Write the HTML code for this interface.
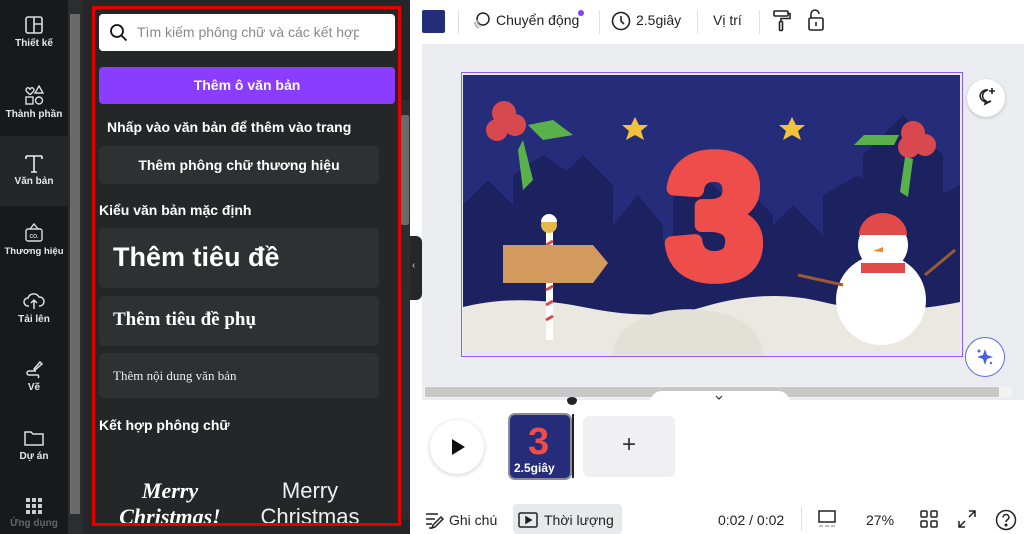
<!DOCTYPE html>
<html><head><meta charset="utf-8">
<style>
*{margin:0;padding:0;box-sizing:border-box}
body{width:1024px;height:534px;overflow:hidden;background:#fff;font-family:"Liberation Sans","Noto Sans CJK SC",sans-serif;position:relative}
.abs{position:absolute}
.rail{left:0;top:0;width:68px;height:534px;background:#18191b}
.ri{position:absolute;left:0;width:68px;text-align:center;color:#e8e8e8;font-size:10px;font-weight:bold}
.ri svg{display:block;margin:0 auto 3px}
.panel{left:68px;top:0;width:342px;height:534px;background:#252627}
.t{color:#fff;font-weight:bold}
.card{position:absolute;left:99px;width:280px;background:#2f3032;border-radius:5px}
.tb{color:#222;font-size:14px}
</style></head><body>
<div class="abs rail"></div>
<div class="abs" style="left:0;top:136px;width:68px;height:70px;background:#252627"></div>
<div class="ri" style="top:15px"><svg width="20" height="20" viewBox="0 0 20 20" fill="none" stroke="#ddd" stroke-width="1.6"><rect x="2" y="2" width="16" height="16" rx="2"/><path d="M10 2v16M10 9h8"/></svg>Thiết kế</div>
<div class="ri" style="top:84px"><svg width="22" height="22" viewBox="0 0 22 22" fill="none" stroke="#ddd" stroke-width="1.4"><path d="M3 6c0-3 4-3 4 0 0-3 4-3 4 0 0 2-4 4-4 5-0-1-4-3-4-5z"/><path d="M16 2l4 7h-8z"/><rect x="3" y="13" width="7" height="7"/><circle cx="16" cy="16.5" r="3.5"/></svg>Thành phần</div>
<div class="ri" style="top:153px"><svg width="22" height="20" viewBox="0 0 22 20" fill="none" stroke="#eee" stroke-width="1.6"><path d="M3 3h16M11 3v16M8 19h6M3 3v3M19 3v3"/></svg>Văn bản</div>
<div class="ri" style="top:221px;font-size:9.5px"><svg width="20" height="22" viewBox="0 0 20 22" fill="none" stroke="#ddd" stroke-width="1.4"><path d="M6 8l4-5 4 5"/><rect x="2" y="8" width="16" height="12" rx="2"/><text x="10" y="17" font-size="5" fill="#ddd" stroke="none" text-anchor="middle">CO.</text></svg>Thương hiệu</div>
<div class="ri" style="top:291px"><svg width="22" height="20" viewBox="0 0 22 20" fill="none" stroke="#ddd" stroke-width="1.5"><path d="M6 15H5a4 4 0 010-8 6 6 0 0111-1 4 4 0 011 9h-1M11 18v-9M8 12l3-3 3 3"/></svg>Tải lên</div>
<div class="ri" style="top:359px"><svg width="20" height="20" viewBox="0 0 20 20" fill="none" stroke="#ddd" stroke-width="1.5"><path d="M10 10l6-7 2 2-7 6zM12 12H5a2 2 0 000 4h9a2 2 0 010 3"/></svg>Vẽ</div>
<div class="ri" style="top:428px"><svg width="22" height="20" viewBox="0 0 22 20" fill="none" stroke="#ddd" stroke-width="1.5"><path d="M2 4h6l2 2h10v11H2z"/></svg>Dự án</div>
<div class="ri" style="top:497px;color:#666"><svg width="18" height="18" viewBox="0 0 18 18" fill="#ccc"><rect x="1" y="1" width="4" height="4"/><rect x="7" y="1" width="4" height="4"/><rect x="13" y="1" width="4" height="4"/><rect x="1" y="7" width="4" height="4"/><rect x="7" y="7" width="4" height="4"/><rect x="13" y="7" width="4" height="4"/><rect x="1" y="13" width="4" height="4"/><rect x="7" y="13" width="4" height="4"/><rect x="13" y="13" width="4" height="4"/></svg>Ứng dụng</div>

<div class="abs panel"></div>
<div class="abs" style="left:68px;top:0;width:14px;height:534px;background:#2c2d2f"></div>
<div class="abs" style="left:70px;top:14px;width:10px;height:500px;background:#6a6a6a"></div>
<div class="abs" style="left:400px;top:100px;width:10px;height:420px;background:#2c2d2f"></div>
<div class="abs" style="left:401px;top:115px;width:8px;height:110px;background:#6a6a6a;border-radius:2px"></div>

<div class="abs" style="left:99px;top:14px;width:296px;height:37px;background:#fff;border-radius:4px"></div>
<svg class="abs" style="left:109px;top:23px" width="20" height="20" viewBox="0 0 20 20" fill="none" stroke="#111" stroke-width="1.8"><circle cx="8" cy="8" r="6"/><path d="M12.5 12.5l5 5"/></svg>
<div class="abs" style="left:137px;top:24px;color:#888;font-size:14px;white-space:nowrap;width:222px;overflow:hidden">Tìm kiếm phông chữ và các kết hợp</div>
<div class="abs" style="left:99px;top:67px;width:296px;height:37px;background:#8b3dff;border-radius:4px;color:#fff;font-weight:bold;font-size:14px;text-align:center;line-height:37px">Thêm ô văn bản</div>
<div class="abs t" style="left:107px;top:119px;font-size:14px">Nhấp vào văn bản để thêm vào trang</div>
<div class="card" style="top:146px;height:38px;line-height:38px;text-align:center;color:#fff;font-weight:bold;font-size:14px">Thêm phông chữ thương hiệu</div>
<div class="abs t" style="left:99px;top:202px;font-size:14px">Kiểu văn bản mặc định</div>
<div class="card" style="top:228px;height:60px"><div style="position:absolute;left:14px;top:14px;color:#fff;font-weight:bold;font-size:27px">Thêm tiêu đề</div></div>
<div class="card" style="top:296px;height:50px"><div style="position:absolute;left:14px;top:13px;color:#fff;font-weight:bold;font-size:19px;font-family:'Liberation Serif',serif">Thêm tiêu đề phụ</div></div>
<div class="card" style="top:353px;height:45px"><div style="position:absolute;left:14px;top:15px;color:#eee;font-size:13px;font-family:'Liberation Serif',serif">Thêm nội dung văn bản</div></div>
<div class="abs t" style="left:99px;top:417px;font-size:14px">Kết hợp phông chữ</div>
<div class="abs" style="left:110px;top:478px;width:120px;text-align:center;color:#fff;font-weight:bold;font-style:italic;font-size:22px;font-family:'Liberation Serif',serif;line-height:26px">Merry<br>Christmas!</div>
<div class="abs" style="left:250px;top:478px;width:120px;text-align:center;color:#eee;font-size:22px;line-height:26px">Merry<br>Christmas</div>
<div class="abs" style="left:92px;top:6px;width:309px;height:520px;border:3px solid #e00000"></div>
<div class="abs" style="left:410px;top:236px;width:12px;height:64px;background:#252627;border-radius:0 6px 6px 0"></div>
<div class="abs" style="left:412px;top:260px;color:#ccc;font-size:10px">‹</div>

<!-- top bar -->
<div class="abs" style="left:422px;top:10px;width:23px;height:23px;background:#242d7a;border-radius:2px"></div>
<div class="abs" style="left:458px;top:10px;width:1px;height:24px;background:#e0e0e0"></div>
<svg class="abs" style="left:472px;top:10px" width="22" height="22" viewBox="0 0 22 22" fill="none" stroke="#222" stroke-width="1.5"><circle cx="11" cy="9" r="6"/><path d="M5 10a6 6 0 004 6M3 12a6 6 0 004 6" stroke="#aaa"/></svg>
<div class="abs tb" style="left:496px;top:12px">Chuyển động</div>
<div class="abs" style="left:578px;top:10px;width:6px;height:6px;border-radius:50%;background:#8b3dff"></div>
<div class="abs" style="left:599px;top:10px;width:1px;height:24px;background:#e0e0e0"></div>
<svg class="abs" style="left:611px;top:11px" width="20" height="20" viewBox="0 0 20 20" fill="none" stroke="#222" stroke-width="1.6"><circle cx="10" cy="10" r="8.5"/><path d="M10 5v5l3 3"/></svg>
<div class="abs tb" style="left:636px;top:12px">2.5giây</div>
<div class="abs" style="left:697px;top:10px;width:1px;height:24px;background:#e0e0e0"></div>
<div class="abs tb" style="left:713px;top:12px">Vị trí</div>
<div class="abs" style="left:759px;top:10px;width:1px;height:24px;background:#e0e0e0"></div>
<svg class="abs" style="left:772px;top:9px" width="20" height="24" viewBox="0 0 20 24" fill="none" stroke="#222" stroke-width="1.6"><rect x="2" y="2" width="14" height="5" rx="1"/><path d="M16 4.5h2v5H9v3"/><rect x="7.5" y="12.5" width="3" height="9" rx="1"/></svg>
<svg class="abs" style="left:806px;top:8px" width="20" height="24" viewBox="0 0 20 24" fill="none" stroke="#222" stroke-width="1.6"><path d="M5 10V6a4 4 0 018 0"/><rect x="3" y="10" width="14" height="12" rx="1.5"/><path d="M10 14v4"/></svg>

<!-- canvas area -->
<div class="abs" style="left:422px;top:44px;width:602px;height:356px;background:#ebecf0"></div>
<div class="abs" style="left:461px;top:72px;width:502px;height:285px;border:1.5px solid #8b5cf6"></div>
<svg class="abs" style="left:463px;top:75px" width="497" height="280" viewBox="0 0 497 280">
<rect width="497" height="280" fill="#252c7a"/>
<g fill="#1c2260">
<path d="M0 130l25-25 25 25v-30l30-20 30 20v80H0z"/>
<path d="M90 110l30-30 30 30v90H90z"/>
<path d="M150 150l25-30 25 30v80h-50z"/>
<path d="M210 120l25-25 25 25v100h-50z"/>
<path d="M250 140l30-30 30 30v110h-60z"/>
<path d="M300 160l30-30 30 30v80h-60z"/>
<path d="M360 120l35-20 30 20v120h-65z"/>
<path d="M400 80l40-40 40 40v160h-80z"/>
<path d="M460 130l37-20v130h-37z"/>
<rect x="0" y="165" width="497" height="80"/>
</g>
<path d="M0 232c40-10 80-8 120 0s80 12 120 0 80-15 120-5 90 10 137 0v53H0z" fill="#ebe8e1"/>
<path d="M150 280c0-30 40-50 90-45s60 30 60 45z" fill="#e3e0d8"/>
<circle cx="41" cy="38" r="12" fill="#d8494f"/><circle cx="52" cy="50" r="11" fill="#d8494f"/><circle cx="34" cy="55" r="11" fill="#d8494f"/>
<path d="M65 50l25-5 20 15-30 5z M60 65l10 40-10 10-5-40z" fill="#5ab04a"/>
<circle cx="450" cy="58" r="12" fill="#d8494f"/><circle cx="462" cy="70" r="11" fill="#d8494f"/><circle cx="446" cy="72" r="11" fill="#d8494f"/>
<path d="M436 60l-35 0-10 10 40 0z M442 82l-5 35 8 5 5-38z" fill="#5ab04a"/>
<path d="M172 42l4 8 9 0-7 6 3 9-9-5-9 5 3-9-7-6 9 0z" fill="#f2c33a"/>
<path d="M329 42l4 8 9 0-7 6 3 9-9-5-9 5 3-9-7-6 9 0z" fill="#f2c33a"/>
<text x="252" y="200" font-family="Liberation Sans, sans-serif" font-weight="700" font-size="170" fill="#ef4d4a" stroke="#ef4d4a" stroke-width="14" stroke-linejoin="round" text-anchor="middle">3</text>
<rect x="83" y="155" width="7" height="110" fill="#fff"/><path d="M83 170l7-4M83 185l7-4M83 200l7-4M83 215l7-4M83 230l7-4M83 245l7-4" stroke="#d8494f" stroke-width="3"/>
<circle cx="86" cy="150" r="8" fill="#e6b84a"/><path d="M78 147a8 8 0 0116 0z" fill="#fff"/>
<path d="M40 170h90l15 18-15 20H40z" fill="#d39a5e"/>
<circle cx="418" cy="225" r="45" fill="#fff"/><circle cx="420" cy="170" r="25" fill="#fff"/>
<path d="M396 160a24 22 0 0148 0z" fill="#e24a4a"/><path d="M398 188h44v10h-44z" fill="#e24a4a"/>
<path d="M420 172l-10 4 10 1z" fill="#f08a2c"/>
<path d="M380 210l-45-10M462 200l30-25" stroke="#9b5a34" stroke-width="3"/>
</svg>
<div class="abs" style="left:967px;top:79px;width:38px;height:38px;border-radius:50%;background:#fff;box-shadow:0 1px 3px rgba(0,0,0,.2)"></div>
<svg class="abs" style="left:976px;top:86px" width="22" height="22" viewBox="0 0 22 22" fill="none" stroke="#222" stroke-width="1.6"><path d="M12 4a7 6 0 10 3 11l-6 3 1-3a7 6 0 012-11M16 2v6M13 5h6"/></svg>
<div class="abs" style="left:965px;top:337px;width:40px;height:40px;border-radius:50%;background:#fff;border:1.5px solid #5b6ee8"></div>
<svg class="abs" style="left:975px;top:347px" width="20" height="20" viewBox="0 0 20 20" fill="#4a5ee0"><path d="M10 2l2 6 6 2-6 2-2 6-2-6-6-2 6-2z"/><circle cx="4" cy="4" r="1.5"/><circle cx="16" cy="16" r="1.2"/></svg>
<div class="abs" style="left:422px;top:386px;width:590px;height:12px;background:#f2f2f2"></div>
<div class="abs" style="left:425px;top:387px;width:574px;height:10px;background:#c8c8c8"></div>
<div class="abs" style="left:650px;top:391px;width:140px;height:12px;background:#fff;border-radius:12px 12px 0 0"></div>
<svg class="abs" style="left:715px;top:395px" width="8" height="5" viewBox="0 0 8 5" fill="none" stroke="#333" stroke-width="1.2"><path d="M1 1l3 3 3-3"/></svg>

<!-- timeline -->
<div class="abs" style="left:430px;top:420px;width:54px;height:54px;border-radius:50%;background:#fff;box-shadow:0 1px 5px rgba(0,0,0,.2)"></div>
<svg class="abs" style="left:450px;top:438px" width="16" height="18" viewBox="0 0 16 18"><path d="M2 1l13 8-13 8z" fill="#111"/></svg>
<div class="abs" style="left:508px;top:413px;width:64px;height:67px;border-radius:7px;border:2px solid #8a8d96;background:#252c7a;overflow:hidden"><div style="position:absolute;left:18px;top:6px;color:#ef4d4a;font-size:38px;font-weight:bold">3</div><div style="position:absolute;left:4px;top:46px;color:#fff;font-size:12px;font-weight:bold">2.5giây</div></div>
<div class="abs" style="left:572px;top:414px;width:2px;height:64px;background:#222"></div>
<div class="abs" style="left:567px;top:397px;width:10px;height:8px;background:#222;border-radius:50% 50% 50% 50%/40% 40% 60% 60%"></div>
<div class="abs" style="left:583px;top:416px;width:92px;height:61px;background:#f0f0f2;border-radius:6px;text-align:center;line-height:58px;font-size:24px;color:#333;font-weight:300">+</div>

<!-- bottom bar -->
<svg class="abs" style="left:425px;top:511px" width="20" height="18" viewBox="0 0 20 18" fill="none" stroke="#222" stroke-width="1.5"><path d="M1 3h12M1 8h9M1 13h6M4 17h3M10 16l8-8-2-2-8 8-1 3z"/></svg>
<div class="abs tb" style="left:449px;top:512px">Ghi chú</div>
<div class="abs" style="left:513px;top:504px;width:109px;height:30px;background:#e8e9ec;border-radius:4px"></div>
<svg class="abs" style="left:518px;top:512px" width="20" height="16" viewBox="0 0 20 16" fill="none" stroke="#222" stroke-width="1.5"><rect x="1" y="1" width="18" height="14" rx="1.5"/><path d="M8 5l5 3-5 3z" fill="#222"/></svg>
<div class="abs tb" style="left:544px;top:512px">Thời lượng</div>
<div class="abs tb" style="left:718px;top:512px">0:02 / 0:02</div>
<div class="abs" style="left:801px;top:507px;width:1px;height:24px;background:#e0e0e0"></div>
<svg class="abs" style="left:817px;top:509px" width="20" height="20" viewBox="0 0 20 20" fill="none" stroke="#222" stroke-width="1.5"><rect x="2" y="2" width="16" height="11"/><path d="M2 17h4M8 17h4M14 17h4" stroke="#aaa"/></svg>
<div class="abs tb" style="left:866px;top:512px">27%</div>
<svg class="abs" style="left:920px;top:510px" width="18" height="18" viewBox="0 0 18 18" fill="none" stroke="#222" stroke-width="1.5"><rect x="1" y="1" width="6" height="6" rx="1"/><rect x="11" y="1" width="6" height="6" rx="1"/><rect x="1" y="11" width="6" height="6" rx="1"/><rect x="11" y="11" width="6" height="6" rx="1"/></svg>
<svg class="abs" style="left:958px;top:510px" width="18" height="18" viewBox="0 0 18 18" fill="none" stroke="#222" stroke-width="1.5"><path d="M11 1h6v6M17 1l-6 6M7 17H1v-6M1 17l6-6"/></svg>
<svg class="abs" style="left:995px;top:509px" width="22" height="22" viewBox="0 0 22 22" fill="none" stroke="#222" stroke-width="1.5"><circle cx="11" cy="11" r="9.5"/><path d="M8 8.5a3 3 0 116 0c0 2-3 2-3 4.5"/><circle cx="11" cy="16" r=".8" fill="#222"/></svg>
</body></html>
